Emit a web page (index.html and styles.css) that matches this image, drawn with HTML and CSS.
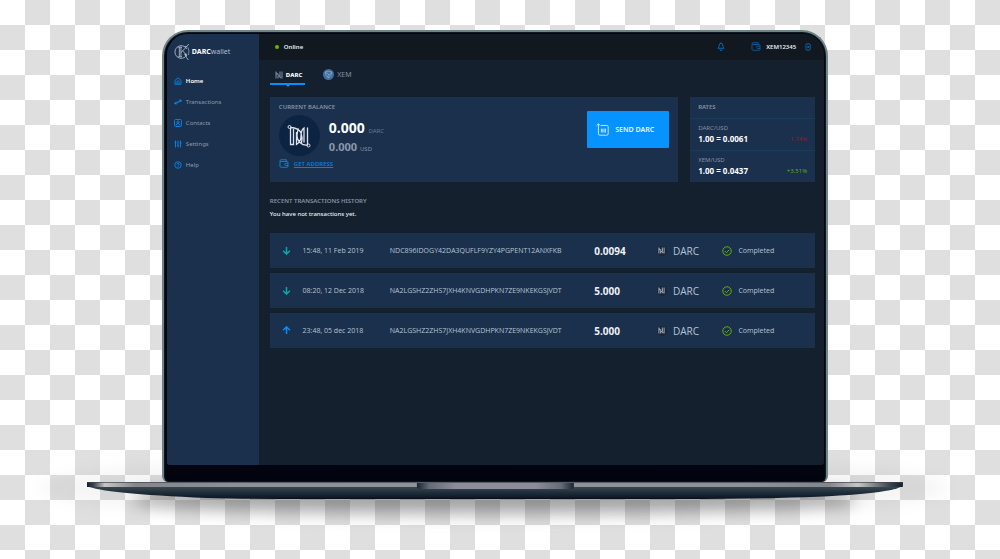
FILE: index.html
```html
<!DOCTYPE html>
<html lang="en">
<head>
<meta charset="utf-8">
<title>DARC wallet</title>
<link rel="stylesheet" href="styles.css">
</head>
<body>
<svg class="defs" aria-hidden="true">
  <symbol id="darc" viewBox="0 0 24 24">
    <path d="M3.500 3.500V20.500H6.500V5M3.500 3.500Q12 4 14 9T14.500 19M9.500 8V20.500Q14 18 14 12T17 4V18.500M11.500 4.500Q10 8 10 12T13.500 19Q16 21.500 21 21M20.500 3.500V21" fill="none" stroke="currentColor" stroke-width="1.300"/>
    <circle cx="2.500" cy="3" r="1.500" fill="none" stroke="currentColor"/><circle cx="21.500" cy="21.500" r="1.500" fill="none" stroke="currentColor"/>
  </symbol>
  <symbol id="darc-small" viewBox="0 0 8 8">
    <path d="M1 0.500V7.500M7 0.500V7.500M1 1.500L6 7M3 2.500V7.500M5 0.500V5.500" fill="none" stroke="currentColor" stroke-width="1.200"/>
  </symbol>
  <symbol id="wallet" viewBox="0 0 20 18">
    <path d="M2 5V3.500Q2 1.500 4 1.500h10.500v3M2 5v9.500q0 2 2 2h12.500q1.500 0 1.500-1.500V6.500Q18 5 16.500 5zM18 8.500h-4.500a2 2 0 0 0 0 4.500H18" fill="none" stroke="currentColor" stroke-width="2"/>
  </symbol>
  <symbol id="down" viewBox="0 0 10 10"><path d="M5 1v8M1.200 5.200L5 9l3.800-3.800" fill="none" stroke="currentColor" stroke-width="1.700"/></symbol>
  <symbol id="up" viewBox="0 0 10 10"><path d="M5 9V1M1.200 4.800L5 1l3.800 3.800" fill="none" stroke="currentColor" stroke-width="1.700"/></symbol>
  <symbol id="check" viewBox="0 0 20 20">
    <circle cx="10" cy="10" r="8.500" fill="none" stroke="currentColor" stroke-width="2"/>
    <path d="M5.500 10l3.500 3.500 5.500-6" fill="none" stroke="currentColor" stroke-width="2"/>
  </symbol>
</svg>

<div class="laptop">
  <div class="lid">
    <div class="screen">
      <aside class="sidebar">
        <a class="brand" href="#">
          <svg class="brand-mark" viewBox="0 0 30 34" fill="none" stroke="currentColor">
            <path d="M24 11A12 12 0 1 0 24 23" stroke-width="1.600"/>
            <path d="M10 8v18M13 8v18M8 8h7M8 26h7M13 18l10-10M16 15q5 3 6 8t5 9M22 8l6-6M20 7h5" stroke-width="1.600"/>
            <path d="M26 8q4 7 1 15" stroke-width="1.200"/>
            <circle cx="22" cy="22" r="1.800" fill="currentColor"/>
          </svg>
          <span><b>DARC</b>wallet</span>
        </a>
        <nav class="nav">
          <a class="nav-link active" href="#">
            <svg class="icon" viewBox="0 0 16 16"><path d="M2 7l6-5.500L14 7v7.500H2zM6 14V9.500a2 2 0 0 1 4 0V14" /></svg>Home</a>
          <a class="nav-link" href="#">
            <svg class="icon" viewBox="0 0 16 16"><path d="M1 9.500q4 1 6-1.500t8-3M11 3l4 2-4 2.500M15 6.500q-4 0-6 2t-8 2.500M5 8l-4 3 4 1.500"/></svg>Transactions</a>
          <a class="nav-link" href="#">
            <svg class="icon" viewBox="0 0 16 16"><rect x="1" y="1" width="14" height="14" rx="2"/><circle cx="8" cy="6" r="2.200"/><path d="M4 13q0-4 4-4t4 4"/></svg>Contacts</a>
          <a class="nav-link" href="#">
            <svg class="icon" viewBox="0 0 16 16"><path d="M3 1v14M8 1v14M13 1v14M1 5h4M6 11h4M11 6h4" stroke-width="2"/></svg>Settings</a>
          <a class="nav-link" href="#">
            <svg class="icon" viewBox="0 0 16 16"><circle cx="8" cy="8" r="6.500"/><path d="M5.800 6.500q0-2 2.200-2t2.200 1.800T8 8.800v.7M8 10.500V12"/></svg>Help</a>
        </nav>
      </aside>

      <div class="main">
        <header class="topbar">
          <span class="online">Online</span>
          <button class="bell" type="button" aria-label="Notifications">
            <svg class="icon" viewBox="0 0 18 20"><path d="M2 14q3-2 3-7a4 4 0 0 1 8 0q0 5 3 7zM9 3V1M6.500 16.500a2.500 2.500 0 0 0 5 0"/></svg>
          </button>
          <span class="account"><svg class="wallet-icon"><use href="#wallet"/></svg>XEM12345</span>
          <button class="logout" type="button" aria-label="Log out">
            <svg class="icon" viewBox="0 0 16 18"><path d="M3 6V4q0-2 2-2h6q2 0 2 2v10q0 2-2 2H5q-2 0-2-2v-2M1 9h8M7 6l3 3-3 3"/></svg>
          </button>
        </header>

        <main class="content">
          <div class="tabs">
            <button class="tab selected" type="button"><svg class="coin"><use href="#darc-small"/></svg>DARC</button>
            <button class="tab" type="button">
              <svg class="xem" viewBox="0 0 22 22"><circle cx="11" cy="11" r="11" fill="#406f9e"/><path d="M4.500 6q6-3 13 0 0 8-6.500 12Q4.500 14 4.500 6zM5 8q5-1 6 3t6-4M11 11q-2 4 0 7" fill="none" stroke="#92b2cd" stroke-width="1.300"/></svg>XEM</button>
          </div>

          <div class="cards">
            <section class="card balance">
              <div class="funds">
                <h2 class="label">CURRENT BALANCE</h2>
                <div class="amounts">
                  <span class="medal"><svg><use href="#darc"/></svg></span>
                  <div class="figures">
                    <p class="primary">0.000 <small>DARC</small></p>
                    <p class="secondary">0.000 <small>USD</small></p>
                  </div>
                </div>
                <a class="address" href="#"><svg class="wallet-icon"><use href="#wallet"/></svg><span>GET ADDRESS</span></a>
              </div>
              <button class="send" type="button">
                <svg viewBox="0 0 24 24" fill="none" stroke="currentColor" stroke-width="1.500"><path d="M9 4.500h11q2.500 0 2.500 2.500v13q0 2.500-2.500 2.500H7q-2.500 0-2.500-2.500V1.500M1 5l3.500-3.500L8 5M10 10.500v7M12.500 10.500v7M15 10.500v7M17.500 10.500v7"/></svg>SEND DARC</button>
            </section>

            <section class="card rates">
              <h2 class="label">RATES</h2>
              <div class="rate">
                <span class="pair">DARC/USD</span>
                <strong>1.00 = 0.0061</strong><span class="change loss">-1.74%</span>
              </div>
              <div class="rate">
                <span class="pair">XEM/USD</span>
                <strong>1.00 = 0.0437</strong><span class="change gain">+3.51%</span>
              </div>
            </section>
          </div>

          <h2 class="label">RECENT TRANSACTIONS HISTORY</h2>
          <p class="note">You have not transactions yet.</p>

          <table class="history">
            <colgroup><col class="c-dir"><col class="c-date"><col class="c-id"><col class="c-sum"><col class="c-coin"><col></colgroup>
            <tbody>
              <tr>
                <td class="dir"><svg class="arrow in" aria-label="Received"><use href="#down"/></svg></td>
                <td class="date">15:48, 11 Feb 2019</td>
                <td>NDC896IDOGY42DA3QUFLF9YZY4PGPENT12ANXFKB</td>
                <td class="sum">0.0094</td>
                <td><span class="asset"><span class="badge"><svg><use href="#darc-small"/></svg></span>DARC</span></td>
                <td><span class="status"><svg><use href="#check"/></svg>Completed</span></td>
              </tr>
              <tr>
                <td class="dir"><svg class="arrow in" aria-label="Received"><use href="#down"/></svg></td>
                <td class="date">08:20, 12 Dec 2018</td>
                <td>NA2LGSHZ2ZHS7JXH4KNVGDHPKN7ZE9NKEKGSJVDT</td>
                <td class="sum">5.000</td>
                <td><span class="asset"><span class="badge"><svg><use href="#darc-small"/></svg></span>DARC</span></td>
                <td><span class="status"><svg><use href="#check"/></svg>Completed</span></td>
              </tr>
              <tr>
                <td class="dir"><svg class="arrow out" aria-label="Sent"><use href="#up"/></svg></td>
                <td class="date">23:48, 05 dec 2018</td>
                <td>NA2LGSHZ2ZHS7JXH4KNVGDHPKN7ZE9NKEKGSJVDT</td>
                <td class="sum">5.000</td>
                <td><span class="asset"><span class="badge"><svg><use href="#darc-small"/></svg></span>DARC</span></td>
                <td><span class="status"><svg><use href="#check"/></svg>Completed</span></td>
              </tr>
            </tbody>
          </table>
        </main>
      </div>
    </div>
  </div>

  <div class="base">
    <svg viewBox="0 0 816 18" preserveAspectRatio="none" aria-hidden="true">
      <defs>
        <linearGradient id="under" x1="0" y1="0" x2="0" y2="1">
          <stop offset=".25" stop-color="#3d4b52"/><stop offset=".6" stop-color="#202f3b"/><stop offset=".9" stop-color="#0f1a29"/><stop offset="1" stop-color="#050b17"/>
        </linearGradient>
        <linearGradient id="deck" gradientUnits="userSpaceOnUse" x1="0" y1="0" x2="816" y2="0">
          <stop offset="0" stop-color="#141f2b"/><stop offset=".008" stop-color="#3a424c"/><stop offset=".022" stop-color="#c6c6c6"/><stop offset=".06" stop-color="#84868c"/><stop offset=".2" stop-color="#8f929b"/>
          <stop offset=".8" stop-color="#8f929b"/><stop offset=".91" stop-color="#84868c"/><stop offset=".945" stop-color="#c6c6c6"/><stop offset=".985" stop-color="#3a424c"/><stop offset="1" stop-color="#141f2b"/>
        </linearGradient>
        <linearGradient id="notch">
          <stop offset="0" stop-color="#1a2433"/><stop offset=".08" stop-color="#666b77"/><stop offset=".25" stop-color="#8c8d98"/>
          <stop offset=".75" stop-color="#8c8d98"/><stop offset=".92" stop-color="#666b77"/><stop offset="1" stop-color="#1a2433"/>
        </linearGradient>
      </defs>
      <path d="M0 0H816V4C805 10 770 14 690 16Q650 17 590 17H220Q160 17 120 16C50 13 10 9 0 4Z" fill="url(#under)"/>
      <path d="M0 0H816V5H0Z" fill="url(#deck)"/>
      <path d="M0 0H816V1H0Z" fill="#40464f" fill-opacity=".7"/>
      <path d="M330 1H487V5Q487 7 484 7H333Q330 7 330 5Z" fill="url(#notch)"/>
    </svg>
  </div>
</div>
</body>
</html>
```

FILE: styles.css
```css
* { box-sizing: border-box; }

body {
  margin: 0;
  min-height: 100vh;
  padding: 30px 10px 30px 0;
  font: 6px/8px "Noto Sans", "Open Sans", sans-serif;
  color: #e8edf3;
  background: repeating-conic-gradient(#dfdfdf 0 25%, #fff 0 50%) 0 0 / 50px 50px;
}

h2, p { margin: 0; font-size: inherit; }
button { margin: 0; padding: 0; border: 0; background: none; color: inherit; font: inherit; cursor: pointer; }
a { color: inherit; text-decoration: none; }
svg { display: block; flex: none; }
.defs { position: absolute; width: 0; height: 0; }

.icon { width: 8px; height: 8px; fill: none; stroke: #087fdc; stroke-width: 2; }
.wallet-icon { width: 10px; height: 9px; color: #087fdc; }

/* Laptop */
.laptop { position: relative; display: flex; flex-direction: column; align-items: center; }
.laptop::before {
  content: "";
  position: absolute;
  inset: auto 4% -22px;
  height: 66px;
  border-radius: 50%;
  background: rgba(0, 0, 0, .04);
  filter: blur(8px);
}

.lid {
  position: relative;
  width: 67.3%;
  padding: 2px 2px 17px 3px;
  border: solid #718386;
  border-width: 2px 2px 0;
  border-radius: 26px 26px 6px 6px;
  background: #020510;
  box-shadow: inset 0 0 1px 1px #101b25;
}

.screen {
  display: flex;
  min-height: 431px;
  border-radius: 21px 21px 3px 3px;
  overflow: hidden;
  background: #14202e;
}

.base { position: relative; width: 82.4%; height: 17px; }
.base svg { position: relative; width: 100%; height: 18px; }
.base::before {
  content: "";
  position: absolute;
  inset: 4px 6% -13px;
  border-radius: 50% / 40%;
  background: rgba(0, 0, 0, .34);
  filter: blur(8px);
}

/* Sidebar */
.sidebar { flex: none; width: 92px; padding: 9px 7px; background: #1a304d; }
.brand { display: flex; align-items: center; gap: 2px; color: #b3bfcc; font-size: 7px; }
.brand b { color: #fff; font-weight: 700; }
.brand-mark { width: 16px; height: 18px; }
.nav { display: flex; flex-direction: column; gap: 13px; margin-top: 16px; }
.nav-link { display: flex; align-items: center; gap: 4px; color: #8c9aab; }
.nav-link.active { color: #fff; font-weight: 600; }

/* Top bar */
.main { flex: 1; min-width: 0; }
.topbar { display: flex; align-items: center; height: 26px; padding: 2px 12px 3px 16px; background: #111820; font-weight: 600; }
.online { display: flex; align-items: center; gap: 5px; margin-right: auto; }
.online::before { content: ""; width: 4px; height: 4px; border-radius: 50%; background: #63b800; }
.bell { margin-right: 26px; }
.bell .icon { height: 9px; }
.bell .icon, .logout .icon { stroke: #0a6fbd; }
.account { display: flex; align-items: center; gap: 5px; margin-right: 8px; }
.account .wallet-icon { color: #0b5590; }

/* Content */
.content { padding: 6px 9px 6px 11px; }
.tabs { display: flex; gap: 13px; height: 19px; }
.tab { position: relative; display: flex; align-items: center; gap: 3px; padding: 0 3px 0 5px; border-bottom: 2px solid transparent; color: #8391a3; font-size: 7px; }
.tab.selected { color: #fff; font-size: 6px; font-weight: 800; border-bottom-color: #0690ff; }
.tab.selected::after {
  content: "";
  position: absolute;
  top: 100%;
  left: 50%;
  margin-left: -4px;
  border: 4px solid transparent;
  border-top-color: #0690ff;
  border-bottom: 0;
}
.coin { width: 8px; height: 8px; color: #6c7d93; }
.xem { width: 11px; height: 11px; }

.label { color: #8492a5; font-weight: 600; }

.cards { display: flex; gap: 12px; margin: 12px 0 15px; }
.card { background: #1a304d; }
.balance { display: flex; flex: 1; justify-content: space-between; align-items: flex-start; padding: 6px 9px; }
.amounts { display: flex; align-items: center; gap: 9px; margin: 4px 0 3px; }
.medal { display: grid; place-items: center; width: 41px; height: 41px; border-radius: 50%; background: #0c2442; }
.medal svg { width: 24px; height: 24px; color: #dce2e9; }
.figures { padding-top: 3px; }
.primary { font-size: 14px; line-height: 19px; font-weight: 700; color: #fff; }
.secondary { font-size: 11px; line-height: 19px; font-weight: 700; color: #8b99ab; }
.primary small, .secondary small { font-size: 6px; line-height: 1; font-weight: 400; color: #66778e; }
.secondary small { color: #8391a3; }
.address { display: flex; align-items: center; gap: 5px; color: #087fdc; font-weight: 600; }
.address span { text-decoration: underline; }
.send {
  display: flex;
  align-items: center;
  gap: 6px;
  height: 37px;
  margin-top: 8px;
  padding: 0 15px 0 9px;
  border-radius: 1px;
  background: #0693ff;
  color: #e8f4ff;
  font-size: 7px;
  font-weight: 600;
}
.send svg { width: 13px; height: 13px; }

.rates { width: 125px; }
.rates .label { padding: 6px 8px 7px; }
.rate {
  display: grid;
  grid-template-columns: 1fr auto;
  align-items: center;
  row-gap: 1px;
  height: 32px;
  padding: 5px 8px;
  border-top: 1px solid #193b5b;
}
.rate strong { font-size: 8px; line-height: 12px; font-weight: 700; color: #fff; }
.pair { grid-column: 1 / -1; color: #8391a3; }
.loss { color: #9c1a24; }
.gain { color: #5eae0b; }

.note { margin-top: 5px; font-weight: 500; }

/* History */
.history { width: 100%; margin-top: 10px; border-spacing: 0 5px; table-layout: fixed; color: #b8c4d2; font-family: "Open Sans", "Noto Sans", sans-serif; }
.history tr { height: 35px; background: #1a304d; }
.history td { padding: 0; font-size: 7px; line-height: 10px; white-space: nowrap; }
.c-dir { width: 6%; }
.c-date { width: 16%; }
.c-id { width: 37.5%; }
.c-sum { width: 11.5%; }
.c-coin { width: 12%; }
.arrow { width: 9px; height: 9px; margin-left: 12px; }
.in { color: #09a5a5; }
.out { color: #098bf3; }
.history .sum { font-size: 10px; font-weight: 700; color: #eef2f6; }
.asset { display: flex; align-items: center; gap: 6px; font-size: 10px; }
.badge { display: grid; place-items: center; width: 10px; height: 10px; border-radius: 50%; background: #192738; color: #99a3af; }
.badge svg { width: 7px; height: 7px; }
.status { display: flex; align-items: center; gap: 6px; }
.status svg { width: 10px; height: 10px; color: #66ab08; }
```
